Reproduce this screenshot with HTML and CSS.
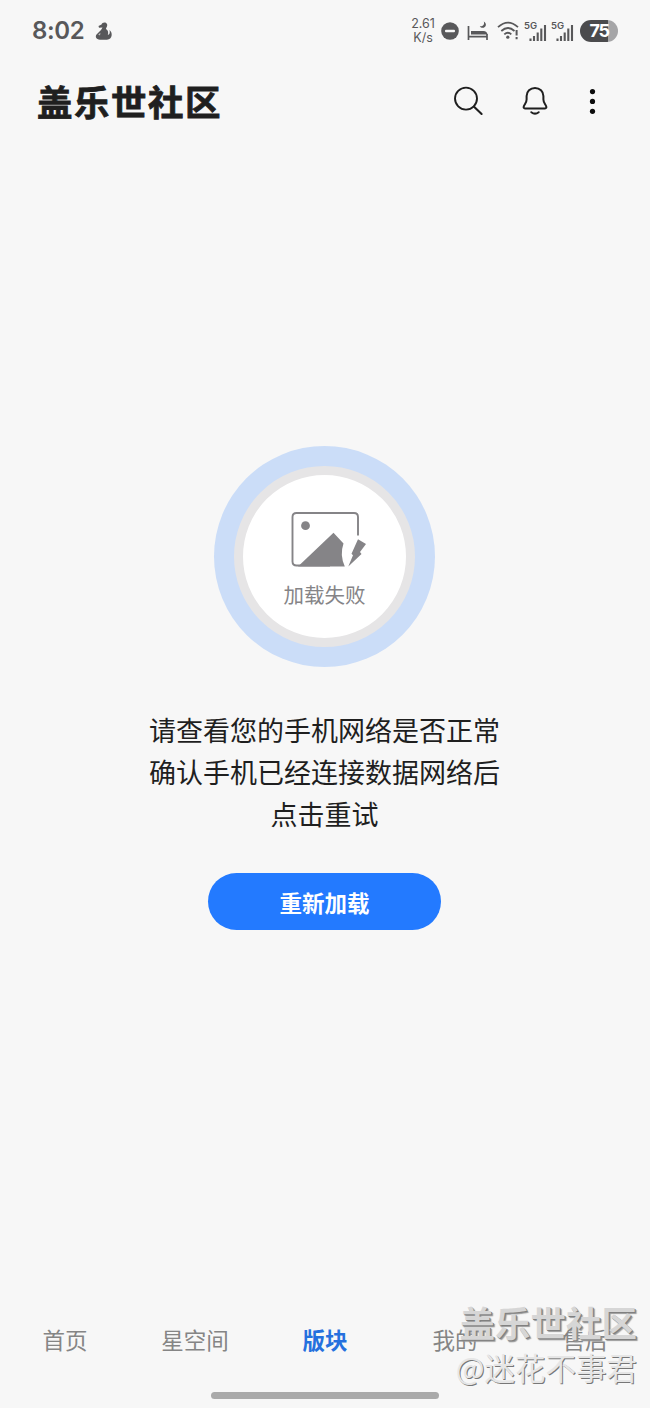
FILE: index.html
```
<!DOCTYPE html>
<html lang="zh-CN">
<head>
    <meta charset="UTF-8">
    <meta name="viewport" content="width=device-width, initial-scale=1.0">
    <title>盖乐世社区</title>
    <link rel="stylesheet" href="styles.css">
</head>
<body>
    <div class="status-bar">
        <span class="time">8:02</span>
        <svg class="app-dot" width="18" height="20" viewBox="0 0 18 20">
            <path d="M3.5 5 L6.5 3.5 C7 1 11.5 0.5 12.2 3.5 C12.6 5.5 11 6.5 11 8 C13.5 9.5 13.5 12 12.8 14 C15 13.5 15 11.5 14.5 9 C18 11.5 17.5 18.5 12 18.7 H5 C1 18.5 0 15.5 1.5 13.5 L6 9 L7.5 6.5 L4 6.8 Z" fill="#58585a"/>
            <path d="M3.2 13.5 L5.5 11.8 L5 14.6 Z" fill="#bbb"/>
        </svg>
        <div class="status-right">
            <div class="speed"><span>2.61</span><span>K/s</span></div>
            <svg class="dnd" width="18" height="18" viewBox="0 0 18 18">
                <circle cx="9" cy="9" r="8.8" fill="#58585a"/>
                <rect x="4" y="7.8" width="10" height="2.4" rx="1" fill="#f7f7f7"/>
            </svg>
            <svg class="bed" width="22" height="20" viewBox="0 0 22 20">
                <path d="M1.5 5 V19 M1.5 15.7 H20.5 M20 13 V19" fill="none" stroke="#58585a" stroke-width="1.7"/>
                <path d="M4 10 H16.5 Q20 10 20.5 13.5 H4 Z" fill="#58585a"/>
                <path d="M16.8 0.5 C17.8 3.5 16 5.6 12.8 5.3 C14.5 8 18.5 7 18.9 4 C19 2.6 18.2 1.2 16.8 0.5 Z" fill="#58585a"/>
            </svg>
            <svg class="wifi" width="23" height="19" viewBox="0 0 23 19">
                <path d="M1 6.2 Q11 -3 21 6.2 M4.3 10 Q11 4 17.5 10 M7.3 13.4 Q11 10 14.3 13.4" fill="none" stroke="#58585a" stroke-width="1.8"/>
                <circle cx="10.8" cy="16.2" r="1.6" fill="#58585a"/>
                <path d="M19.6 9 V14.5 M19.6 16 V18.2" stroke="#58585a" stroke-width="2"/>
            </svg>
            <div class="signal">
                <span>5G</span>
                <svg width="18" height="17" viewBox="0 0 18 17">
                    <path d="M1.5 14.5 V17 M5 12 V17 M8.7 8.5 V17 M12.3 4.5 V17 M16 1 V17" stroke="#58585a" stroke-width="2.1"/>
                </svg>
            </div>
            <div class="signal">
                <span>5G</span>
                <svg width="18" height="17" viewBox="0 0 18 17">
                    <path d="M1.5 14.5 V17 M5 12 V17 M8.7 8.5 V17 M12.3 4.5 V17 M16 1 V17" stroke="#58585a" stroke-width="2.1"/>
                </svg>
            </div>
            <div class="battery">75</div>
        </div>
    </div>

    <header class="header">
        <h1 class="title">盖乐世社区</h1>
        <div class="actions">
            <svg width="32" height="32" viewBox="0 0 32 32">
                <circle cx="13" cy="13.6" r="11" fill="none" stroke="#1f1f1f" stroke-width="1.9"/>
                <path d="M20.8 21.6 L28.6 29" stroke="#1f1f1f" stroke-width="2.1" stroke-linecap="round"/>
            </svg>
            <svg width="32" height="32" viewBox="0 0 32 32">
                <path d="M16 3 C11.2 3 7.6 6.5 7.6 11 V14.5 C7.6 17.5 5.7 19.2 4.8 21.4 C4.3 22.6 4.8 23.4 6 23.4 H26 C27.2 23.4 27.7 22.6 27.2 21.4 C26.3 19.2 24.4 17.5 24.4 14.5 V11 C24.4 6.5 20.8 3 16 3 Z" fill="none" stroke="#1f1f1f" stroke-width="2"/>
                <path d="M12.3 27.2 Q16 30 19.7 27.2" fill="none" stroke="#1f1f1f" stroke-width="2" stroke-linecap="round"/>
            </svg>
            <svg class="more" width="8" height="32" viewBox="0 0 8 32">
                <circle cx="3.5" cy="6.6" r="2.6" fill="#0d0d0d"/>
                <circle cx="3.5" cy="16.4" r="2.6" fill="#0d0d0d"/>
                <circle cx="3.5" cy="26.3" r="2.6" fill="#0d0d0d"/>
            </svg>
        </div>
    </header>

    <main class="content">
        <div class="ring">
            <div class="circle">
                <svg width="80" height="58" viewBox="0 0 80 58">
                    <path d="M45 54.5 H11.5 Q7.5 54.5 7.5 50.5 V6 Q7.5 2 11.5 2 H69 Q73 2 73 6 V24.5" fill="none" stroke="#858487" stroke-width="1.9"/>
                    <circle cx="20.5" cy="14.7" r="4.4" fill="#858487"/>
                    <path d="M13 55.4 L48.5 21.8 L58.5 32.5 Q54.5 44 59.8 55.4 Z" fill="#858487"/>
                    <path d="M73 28.3 L81 33 L75 41 L76.5 43 L63.3 55.6 L68 44.3 L66.5 42.8 Z" fill="#858487"/>
                </svg>
                <p class="fail">加载失败</p>
            </div>
        </div>
        <p class="message">请查看您的手机网络是否正常<br>确认手机已经连接数据网络后<br>点击重试</p>
        <button class="reload">重新加载</button>
    </main>

    <nav class="tabs">
        <a>首页</a>
        <a>星空间</a>
        <a class="active">版块</a>
        <a>我的</a>
        <a>售后</a>
    </nav>
    <div class="home-bar"></div>

    <div class="watermark">
        <p class="mark-name">盖乐世社区</p>
        <p class="mark-user">@迷花不事君</p>
    </div>
</body>
</html>
```

FILE: styles.css
```
*, *::before, *::after {
    box-sizing: border-box;
}
body {
    margin: 0;
    height: 1408px;
    position: relative;
    display: flex;
    flex-direction: column;
    overflow: hidden;
    background: #f7f7f7;
    color: #1f1f1f;
    font-family: "Noto Sans CJK SC", sans-serif;
}
p, h1 {
    margin: 0;
}
svg {
    overflow: visible;
}

/* status bar */
.status-bar {
    display: flex;
    align-items: center;
    height: 61px;
    padding: 0 32px;
    color: #58585a;
}
.time {
    width: 52px;
    font: 600 24px/30px Inter, sans-serif;
    letter-spacing: -0.4px;
}
.app-dot {
    margin-left: 11px;
}
.status-right {
    display: flex;
    align-items: center;
    margin-left: auto;
}
.speed {
    display: flex;
    flex-direction: column;
    align-items: center;
    width: 26px;
    font: 12.5px/14px Inter, sans-serif;
}
.dnd {
    margin-left: 5px;
}
.bed {
    margin-left: 8px;
}
.wifi {
    margin-left: 8px;
}
.signal {
    display: flex;
    align-items: flex-end;
    width: 23px;
    height: 20px;
    margin-left: 4px;
}
.signal span {
    align-self: flex-start;
    width: 5px;
    font: 600 9.5px/10px Inter, sans-serif;
}
.signal svg {
    flex: none;
}
.battery {
    width: 38px;
    height: 22px;
    margin-left: 6px;
    border-radius: 11px;
    background: linear-gradient(to right, #4b4b4d 28px, #a5a5a7 28px);
    color: #fff;
    font: 700 18px/22px Inter, sans-serif;
    letter-spacing: -1.4px;
    text-align: center;
}

/* header */
.header {
    display: flex;
    align-items: center;
    justify-content: space-between;
    height: 80px;
    padding: 0 53px 0 37px;
}
.title {
    font-size: 35.5px;
    font-weight: 700;
    line-height: 54px;
    letter-spacing: 1.5px;
    -webkit-text-stroke: 0.8px #1f1f1f;
}
.actions {
    display: flex;
    align-items: center;
}
.actions svg {
    margin-right: 34px;
}
.actions .more {
    margin: 0 0 0 4px;
}

/* error state */
.content {
    flex: 1;
    display: flex;
    flex-direction: column;
    align-items: center;
    padding: 305px 1px 0 0;
}
.ring {
    width: 221px;
    height: 221px;
    padding: 20px;
    border-radius: 50%;
    background: #cbddf8;
}
.circle {
    display: flex;
    flex-direction: column;
    align-items: center;
    height: 181px;
    padding-top: 36px;
    border: 9px solid #e6e5e6;
    border-radius: 50%;
    background: #fff;
}
.fail {
    margin-top: 10px;
    color: #858487;
    font-size: 20.5px;
    line-height: 30px;
}
.message {
    margin-top: 42px;
    font-size: 27px;
    line-height: 42px;
    text-align: center;
}
.reload {
    width: 233px;
    height: 57px;
    margin-top: 38px;
    padding: 1px 0 0;
    border: none;
    border-radius: 29px;
    background: #237aff;
    color: #fff;
    font: 700 22.5px/56px "Noto Sans CJK SC", sans-serif;
}

/* bottom tabs */
.tabs {
    display: flex;
    height: 68px;
}
.tabs a {
    flex: 1;
    color: #858585;
    font-size: 22.5px;
    line-height: 51px;
    text-align: center;
}
.tabs .active {
    color: #2570de;
    font-weight: 700;
}
.home-bar {
    align-self: center;
    width: 228px;
    height: 7px;
    margin: 10px 1px 9px 0;
    border-radius: 4px;
    background: #aaa;
}

/* watermark */
.watermark {
    position: absolute;
    right: 13px;
    bottom: 18px;
    text-align: right;
    white-space: nowrap;
}
.mark-name {
    color: #d6d6d6;
    font-size: 35.5px;
    font-weight: 700;
    line-height: 47px;
    text-shadow: 1px 1px 0 #808080, 2px 2px 1px #999;
}
.mark-user {
    color: #e6e6e6;
    font-size: 30.5px;
    line-height: 45px;
    text-shadow: 1px 1px 0 #777;
}
```
